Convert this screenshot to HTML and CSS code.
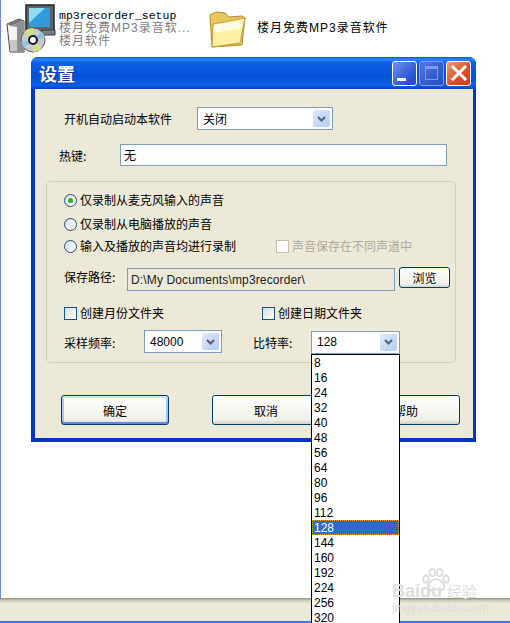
FILE: index.html
```html
<!DOCTYPE html>
<html lang="zh-CN">

<head>
    <meta charset="UTF-8">
    <meta name="viewport" content="width=device-width, initial-scale=1.0">
    <title>设置</title>
    <link rel="stylesheet" href="styles.css">
</head>

<body>
    <div class="desktop">
        <div class="files">
            <div class="file file-setup">
                <svg class="setup-icon" width="50" height="50" viewBox="0 0 50 50">
                    <path d="M1 20l12-5 5 2v31H4z" fill="#f4f4f2" stroke="#444" stroke-width="1" />
                    <path d="M1 20l12-5 5 2-13 5z" fill="#77797c" />
                    <path d="M5 22l13-5v31H11V23z" fill="#8d8f92" />
                    <rect x="4" y="36" width="7" height="11" fill="#c8c8c8" />
                    <rect x="20" y="1" width="28" height="26" fill="#5d626c" stroke="#23262c" stroke-width="1.500" />
                    <rect x="23" y="4" width="21" height="19" fill="#2f9bd8" />
                    <path d="M23 4h16L23 19z" fill="#8fdcf4" />
                    <path d="M36 26h13v5H36z" fill="#7b7f88" stroke="#3a3d44" stroke-width="1" />
                    <circle cx="27" cy="36" r="12" fill="#c6cbd0" stroke="#5a5d60" stroke-width="1" />
                    <path d="M27 36L18 28a12 12 0 0 1 9-4zM27 36l9 8a12 12 0 0 1-9 4z" fill="#d3df80" />
                    <path d="M27 36l12-2a12 12 0 0 0-3-6z" fill="#93c3dc" />
                    <path d="M27 36l-12 2a12 12 0 0 0 3 6z" fill="#93c3dc" />
                    <circle cx="27" cy="36" r="4" fill="#fff" stroke="#1c1c1c" stroke-width="2" />
                </svg>
                <div class="file-text">
                    <div class="file-name">mp3recorder_setup</div>
                    <div class="file-sub">楼月免费MP3录音软...</div>
                    <div class="file-sub">楼月软件</div>
                </div>
            </div>
            <div class="file file-folder">
                <svg class="folder-icon" width="38" height="38" viewBox="0 0 38 38">
                    <path d="M1 4l6-3 9 1 4 4 13-1 3 2-3 27-30 2z" fill="#e9c65e" stroke="#a98a32" stroke-width="1" />
                    <path d="M4 13l32-6-5 25-28 4z" fill="#fff0a4" stroke="#c49c3c" stroke-width="1" />
                    <path d="M5 14l29-5-2 8-27 5z" fill="#fffbe0" />
                </svg>
                <div class="folder-name">楼月免费MP3录音软件</div>
            </div>
        </div>

        <div class="window">
            <div class="titlebar">
                <span class="title">设置</span>
                <div class="win-buttons">
                    <span class="win-btn win-min"><i></i></span>
                    <span class="win-btn win-max"><i></i></span>
                    <span class="win-btn win-close">
                        <svg width="16" height="16" viewBox="0 0 16 16">
                            <path d="M2 2l12 12M14 2L2 14" stroke="#fff" stroke-width="3" stroke-linecap="square" />
                        </svg>
                    </span>
                </div>
            </div>
            <div class="dialog">
                <div class="row-autostart">
                    <label class="autostart-label">开机自动启动本软件</label>
                    <div class="combo combo-autostart">
                        <span class="combo-value cjk">关闭</span>
                        <span class="combo-arrow"><svg width="9" height="6" viewBox="0 0 9 6"><path d="M1 1l3.500 3.500L8 1" fill="none" stroke="#4d6185" stroke-width="2" /></svg></span>
                    </div>
                </div>
                <div class="row-hotkey">
                    <label class="hotkey-label">热键:</label>
                    <div class="textbox hotkey-box cjk">无</div>
                </div>

                <div class="group">
                    <div class="option option-1"><span class="radio checked"></span>仅录制从麦克风输入的声音</div>
                    <div class="option option-2"><span class="radio"></span>仅录制从电脑播放的声音</div>
                    <div class="option option-3">
                        <span class="radio"></span><span class="option-3-text">输入及播放的声音均进行录制</span>
                        <span class="disabled-check"><span class="checkbox disabled"></span>声音保存在不同声道中</span>
                    </div>
                    <div class="row-path">
                        <label class="path-label">保存路径:</label>
                        <div class="textbox path-box">D:\My Documents\mp3recorder\</div>
                        <button class="btn btn-browse">浏览</button>
                    </div>
                    <div class="row-checks">
                        <div class="check check-month"><span class="checkbox"></span>创建月份文件夹</div>
                        <div class="check"><span class="checkbox"></span>创建日期文件夹</div>
                    </div>
                    <div class="row-rates">
                        <label class="rate-label">采样频率:</label>
                        <div class="combo combo-sample">
                            <span class="combo-value">48000</span>
                            <span class="combo-arrow"><svg width="9" height="6" viewBox="0 0 9 6"><path d="M1 1l3.500 3.500L8 1" fill="none" stroke="#4d6185" stroke-width="2" /></svg></span>
                        </div>
                        <label class="bit-label">比特率:</label>
                        <div class="combo combo-bit">
                            <span class="combo-value">128</span>
                            <span class="combo-arrow"><svg width="9" height="6" viewBox="0 0 9 6"><path d="M1 1l3.500 3.500L8 1" fill="none" stroke="#4d6185" stroke-width="2" /></svg></span>
                            <ul class="dropdown">
                                <li>8</li>
                                <li>16</li>
                                <li>24</li>
                                <li>32</li>
                                <li>40</li>
                                <li>48</li>
                                <li>56</li>
                                <li>64</li>
                                <li>80</li>
                                <li>96</li>
                                <li>112</li>
                                <li class="selected">128</li>
                                <li>144</li>
                                <li>160</li>
                                <li>192</li>
                                <li>224</li>
                                <li>256</li>
                                <li>320</li>
                            </ul>
                        </div>
                    </div>
                </div>

                <div class="actions">
                    <button class="btn btn-main btn-default">确定</button>
                    <button class="btn btn-main">取消</button>
                    <button class="btn btn-main btn-help">帮助</button>
                </div>
            </div>
        </div>
    </div>

    <div class="taskbar"></div>

    <div class="watermark">
        <svg class="paw" width="30" height="24" viewBox="0 0 32 26">
            <g fill="none" stroke="#dcdcdc" stroke-width="2">
                <ellipse cx="5" cy="12" rx="3" ry="4" />
                <ellipse cx="12" cy="5" rx="3" ry="4" />
                <ellipse cx="20" cy="5" rx="3" ry="4" />
                <ellipse cx="27" cy="12" rx="3" ry="4" />
                <path d="M16 12c-5 0-9 5-9 9 0 3 4 4 9 2 5 2 9 1 9-2 0-4-4-9-9-9z" />
            </g>
        </svg>
        <div class="wm-logo">Baidu <span class="wm-cjk">经验</span></div>
        <div class="wm-url">jingyan.baidu.com</div>
    </div>
</body>

</html>
```

FILE: styles.css
```css
html,
body {
    margin: 0;
    padding: 0;
    height: 100%;
    overflow: hidden;
}

body {
    display: flex;
    flex-direction: column;
    height: 623px;
    background-color: #fff;
    font-family: 'Noto Sans CJK SC', 'Liberation Sans', sans-serif;
    font-size: 12px;
    color: #000;
    position: relative;
}

.desktop {
    flex: 1;
    border-left: 1px solid #6a85e0;
}

/* files on top */
.files {
    display: flex;
    height: 57px;
}

.file {
    display: flex;
}

.file-setup {
    width: 208px;
}

.setup-icon {
    margin: 4px 0 0 5px;
}

.file-text {
    margin: 9px 0 0 3px;
    font-family: 'Liberation Sans', 'Noto Sans CJK SC', sans-serif;
    font-size: 12px;
    line-height: 13px;
    letter-spacing: 1px;
}

.file-name {
    font-family: 'Liberation Mono', monospace;
    font-size: 11.5px;
    letter-spacing: 0;
}

.file-sub {
    color: #808080;
}

.folder-icon {
    margin-top: 11px;
}

.folder-name {
    margin: 20px 0 0 10px;
    font-family: 'Liberation Sans', 'Noto Sans CJK SC', sans-serif;
    font-size: 12px;
    line-height: 16px;
    letter-spacing: 1px;
}

/* dialog window */
.window {
    width: 445px;
    height: 385px;
    margin-left: 30px;
    box-sizing: border-box;
    display: flex;
    flex-direction: column;
    border: 3px solid #0733c8;
    border-top: none;
    border-left-width: 4px;
    border-bottom-width: 4px;
    border-radius: 7px 7px 0 0;
    background-color: #0a55e0;
}

.titlebar {
    height: 32px;
    margin: 0 -3px 0 -4px;
    padding: 0 5px 0 8px;
    display: flex;
    align-items: center;
    justify-content: space-between;
    border-radius: 7px 7px 0 0;
    background: linear-gradient(to bottom, #0a5ce6 0%, #2d84f5 8%, #0c5fe4 18%, #0553d8 60%, #0a60e8 88%, #0344c4 100%);
}

.title {
    font-size: 18px;
    font-weight: bold;
    color: #fff;
    text-shadow: 1px 1px 1px #0a2f90;
}

.win-buttons {
    display: flex;
    gap: 2px;
}

.win-btn {
    width: 23px;
    height: 23px;
    border: 1px solid #fff;
    border-radius: 3px;
    position: relative;
    display: flex;
    align-items: center;
    justify-content: center;
}

.win-min {
    background: linear-gradient(135deg, #6f92ee, #2a55d8 70%, #2048c8);
}

.win-min i {
    position: absolute;
    left: 4px;
    bottom: 4px;
    width: 9px;
    height: 3px;
    background-color: #fff;
}

.win-max {
    border-color: #7f9fe8;
    background: linear-gradient(135deg, #5278e0, #2f58cf 70%, #2a50c4);
}

.win-max i {
    width: 11px;
    height: 10px;
    border: 1px solid #7d9bea;
    border-top-width: 3px;
}

.win-close {
    background: linear-gradient(135deg, #ee9a78, #dc4e24 60%, #c8401a);
}

.dialog {
    flex: 1;
    background-color: #ece9d8;
}

.row-autostart {
    display: flex;
    align-items: center;
    padding: 18px 0 0 29px;
}

.autostart-label {
    width: 133px;
}

.combo {
    position: relative;
    box-sizing: border-box;
    height: 23px;
    padding: 0 2px;
    display: flex;
    align-items: center;
    justify-content: space-between;
    border: 1px solid #7f9db9;
    background-color: #fff;
    font-family: 'Liberation Sans', sans-serif;
}

.combo-value {
    padding-left: 3px;
}

.cjk {
    font-family: 'Noto Sans CJK SC', sans-serif;
}

.combo-arrow {
    width: 17px;
    height: 17px;
    display: flex;
    align-items: center;
    justify-content: center;
    border-radius: 2px;
    background: linear-gradient(135deg, #dfe8fd, #b8cbf8);
}

.combo-autostart {
    width: 136px;
}

.combo-sample {
    width: 78px;
    margin-bottom: 1px;
}

.combo-bit {
    width: 89px;
}

.row-hotkey {
    display: flex;
    align-items: center;
    padding: 14px 0 0 24px;
}

.hotkey-label {
    width: 61px;
}

.textbox {
    box-sizing: border-box;
    height: 22px;
    line-height: 20px;
    padding-left: 3px;
    border: 1px solid #7f9db9;
    background-color: #fff;
}

.hotkey-box {
    width: 327px;
}

/* group box */
.group {
    box-sizing: border-box;
    width: 410px;
    height: 182px;
    margin: 15px 0 0 11px;
    padding: 10px 0 0 17px;
    border: 1px solid #d0d0bf;
    border-radius: 5px;
}

.option {
    height: 16px;
    line-height: 16px;
    display: flex;
    align-items: center;
}

.option-2 {
    margin-top: 8px;
}

.option-3 {
    margin-top: 6px;
}

.option-3-text {
    width: 196px;
}

.radio {
    box-sizing: border-box;
    width: 13px;
    height: 13px;
    margin-right: 3px;
    border: 1px solid #1c5180;
    border-radius: 50%;
    background: linear-gradient(135deg, #dcdcd7, #fff);
    display: flex;
    align-items: center;
    justify-content: center;
}

.radio.checked::after {
    content: '';
    width: 5px;
    height: 5px;
    border-radius: 50%;
    background-color: #2fb32f;
}

.disabled-check {
    display: flex;
    align-items: center;
    color: #aca899;
}

.checkbox {
    box-sizing: border-box;
    width: 13px;
    height: 13px;
    margin-right: 3px;
    border: 1px solid #1c5180;
    background: linear-gradient(135deg, #dcdcd7, #fff);
}

.checkbox.disabled {
    border-color: #c4c1b0;
    background: #fff;
}

.row-path {
    display: flex;
    align-items: flex-start;
    margin-top: 13px;
}

.path-label {
    width: 63px;
    line-height: 20px;
}

.path-box {
    box-sizing: border-box;
    width: 268px;
    height: 23px;
    margin-top: 1px;
    padding-left: 3px;
    line-height: 23px;
    letter-spacing: 0.14px;
    background-color: #ece9d8;
    font-family: 'Liberation Sans', sans-serif;
    color: #222;
}

.btn {
    box-sizing: border-box;
    border: 1px solid #003c74;
    border-radius: 3px;
    padding: 0;
    background: linear-gradient(to bottom, #fff, #f0f0ea 85%, #d6d0c5);
    font-family: 'Noto Sans CJK SC', sans-serif;
    font-size: 12px;
    color: #000;
}

.btn-browse {
    width: 51px;
    height: 21px;
    margin-left: 4px;
}

.row-checks {
    display: flex;
    margin-top: 14px;
}

.check {
    height: 16px;
    line-height: 16px;
    display: flex;
    align-items: center;
}

.check-month {
    width: 198px;
}

.row-rates {
    display: flex;
    align-items: center;
    margin-top: 9px;
}

.rate-label {
    width: 80px;
}

.bit-label {
    width: 58px;
    margin-left: 31px;
}

/* open list */
.dropdown {
    position: absolute;
    left: -1px;
    top: 22px;
    z-index: 10;
    box-sizing: border-box;
    width: 89px;
    margin: 0;
    padding: 0;
    list-style: none;
    border: 1px solid #000;
    background-color: #fff;
}

.dropdown li {
    height: 15px;
    line-height: 17px;
    padding-left: 2px;
}

.dropdown li.selected {
    box-sizing: border-box;
    padding-left: 1px;
    line-height: 15px;
    border: 1px dotted #e8a33a;
    background-color: #316ac5;
    color: #fff;
}

.actions {
    display: flex;
    margin: 32px 0 0 26px;
}

.btn-main {
    flex: none;
    width: 108px;
    height: 30px;
    margin-right: 32px;
}

.btn-default {
    margin-right: 43px;
    box-shadow: inset 0 2px 0 #cee7ff, inset 0 -2px 0 #6982ee, inset 2px 0 0 #a9c4f0, inset -2px 0 0 #a9c4f0;
}

.btn-help {
    margin-right: 0;
}

.taskbar {
    height: 25px;
    box-sizing: border-box;
    border-bottom: 2px solid #3d7be0;
    background: linear-gradient(to bottom, #8f8f82 0, #d8d5c4 3px, #ece9d8 6px);
}

.watermark {
    position: absolute;
    left: 392px;
    top: 568px;
    z-index: 20;
    color: #dedede;
    font-family: 'Liberation Sans', sans-serif;
}

.paw {
    position: absolute;
    left: 29px;
    top: 0;
}

.wm-logo {
    margin-top: 13px;
    font-size: 18px;
    line-height: 20px;
    font-weight: bold;
    white-space: nowrap;
}

.wm-cjk {
    font-family: 'Noto Sans CJK SC', sans-serif;
    font-size: 15px;
    font-weight: normal;
}

.wm-url {
    margin-top: 1px;
    font-size: 12px;
    line-height: 13px;
    white-space: nowrap;
}
```
